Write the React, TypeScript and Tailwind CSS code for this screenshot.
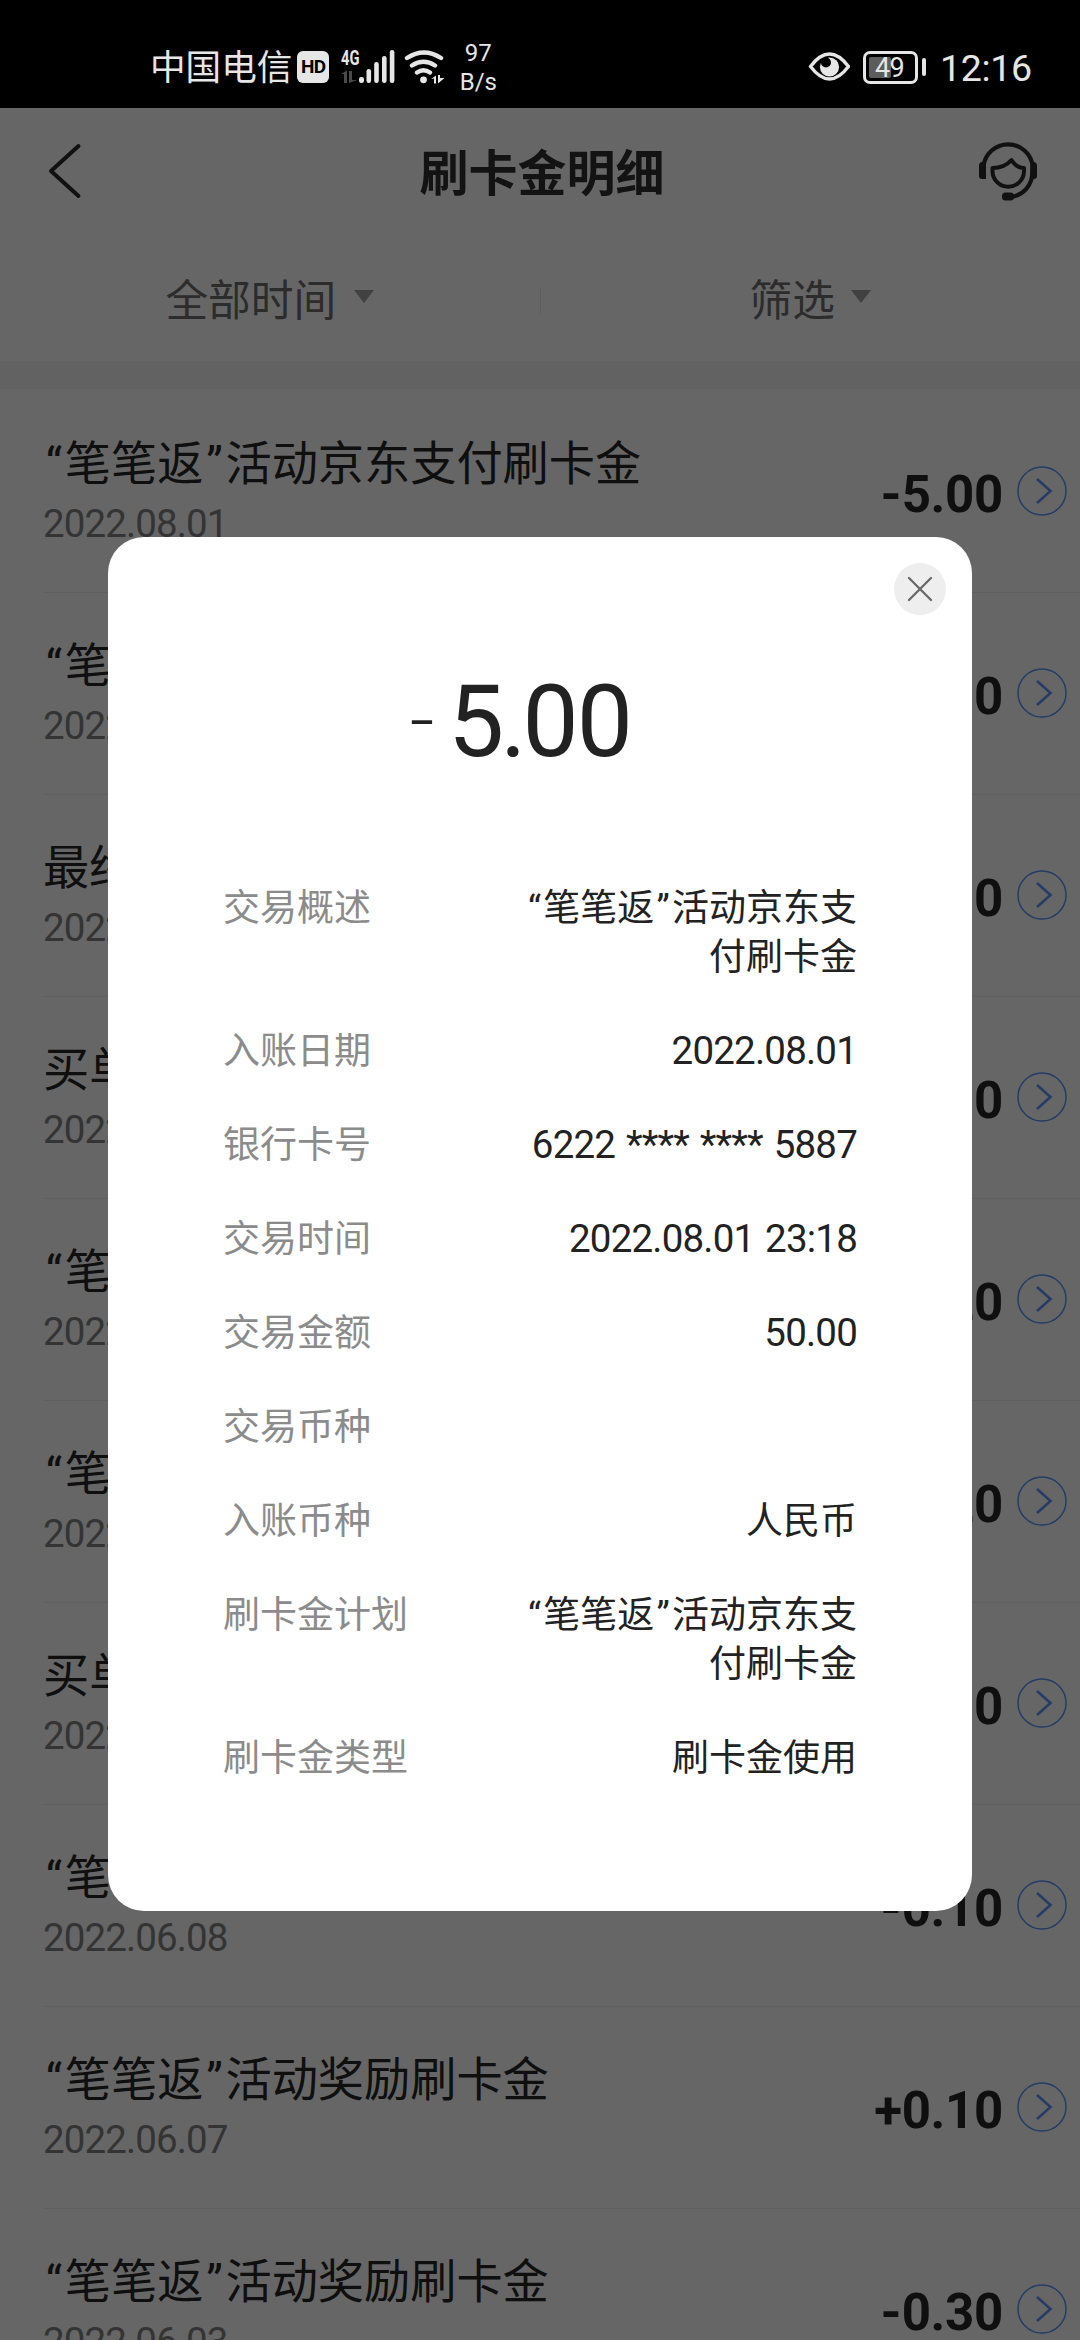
import React from 'react';

interface Entry {
  title: string;
  date: string;
  amount: string;
}

interface Detail {
  label: string;
  value: string;
}

const ENTRIES: Entry[] = [
  { title: '“笔笔返”活动京东支付刷卡金', date: '2022.08.01', amount: '-5.00' },
  { title: '“笔笔返”活动奖励刷卡金', date: '2022.07.31', amount: '+5.00' },
  { title: '最终返现刷卡金', date: '2022.07.20', amount: '+1.00' },
  { title: '买单立减刷卡金', date: '2022.07.12', amount: '-1.00' },
  { title: '“笔笔返”活动奖励刷卡金', date: '2022.06.20', amount: '-0.20' },
  { title: '“笔笔返”活动奖励刷卡金', date: '2022.06.16', amount: '+0.20' },
  { title: '买单立减刷卡金', date: '2022.06.10', amount: '-2.00' },
  { title: '“笔笔返”活动奖励刷卡金', date: '2022.06.08', amount: '-0.10' },
  { title: '“笔笔返”活动奖励刷卡金', date: '2022.06.07', amount: '+0.10' },
  { title: '“笔笔返”活动奖励刷卡金', date: '2022.06.03', amount: '-0.30' },
];

const DETAILS: Detail[] = [
  { label: '交易概述', value: '“笔笔返”活动京东支付刷卡金' },
  { label: '入账日期', value: '2022.08.01' },
  { label: '银行卡号', value: '6222 **** **** 5887' },
  { label: '交易时间', value: '2022.08.01 23:18' },
  { label: '交易金额', value: '50.00' },
  { label: '交易币种', value: '' },
  { label: '入账币种', value: '人民币' },
  { label: '刷卡金计划', value: '“笔笔返”活动京东支付刷卡金' },
  { label: '刷卡金类型', value: '刷卡金使用' },
];

// Curly quotes get some air, Latin and digits are set a little tighter
const MixedText: React.FC<{ text: string }> = ({ text }) => (
  <>
    {text.split(/([\x20-\x7e]+|[“”])/).map((part, i) => {
      if (i % 2 === 0) return part;
      return part === '“' || part === '”' ? (
        <span key={i} className="px-[0.06em]">{part}</span>
      ) : (
        <span key={i} className="text-[38.5px] leading-none tracking-[-0.8px] [word-spacing:2px]">{part}</span>
      );
    })}
  </>
);

const Amount: React.FC<{ value: string }> = ({ value }) => (
  <span className="flex items-center text-[51px] leading-[60px] font-bold tracking-[-0.3px] text-[#262626]">
    {value[0] === '-' ? <span className="mr-px inline-block scale-x-[1.05]">-</span> : <span>+</span>}
    <span>{value.slice(1)}</span>
  </span>
);

const StatusBar = () => (
  <div className="flex h-[108px] shrink-0 items-center bg-black pr-[51px] pl-[150px] text-[#e6e6e6]">
    <span className="mt-[27px] text-[35.6px] leading-[40px]">中国电信</span>
    <span className="mt-[26px] ml-[5px] flex h-8 w-8 items-center justify-center rounded-[6px] bg-[#e6e6e6] text-[19px] font-bold tracking-[-0.5px] text-black">
      HD
    </span>
    <svg className="mt-[26px] ml-[11px] overflow-visible" width="56" height="36" viewBox="340 48 56 36" fill="#e6e6e6">
      <text x="341" y="64" fontSize="21" fontWeight="700" textLength="18.500" lengthAdjust="spacingAndGlyphs">4G</text>
      <path d="M341 73l6-3.500V82h-3v-9zM349 82V70h3v9h5z" fill="#4a4a4a" />
      <rect x="359" y="76" width="5" height="6" rx="2.200" />
      <rect x="366.500" y="68" width="4.600" height="14" rx="2.200" />
      <rect x="374.200" y="61" width="4.600" height="21" rx="2.200" />
      <rect x="382" y="55" width="4.600" height="27" rx="2.200" />
      <rect x="389.800" y="49" width="4.600" height="33" rx="2.200" />
    </svg>
    <svg className="mt-[26px] ml-[8px]" width="42" height="36" viewBox="404 48 42 36" fill="none" stroke="#e6e6e6" strokeWidth="4.400" strokeLinecap="round">
      <path d="M407 57q17-11 34 0M412 64.500q11.500-7.500 23 0M417 71.500q6.500-4.500 13 0" />
      <circle cx="423.500" cy="78.800" r="3.400" fill="#e6e6e6" stroke="none" />
      <path d="M431 78l5-3.500v8h-2v-5zM438 82.500v-8.500h2v3h4.500z" fill="#e6e6e6" stroke="none" />
    </svg>
    <div className="mt-[27px] ml-[14px] flex w-9 flex-col items-center text-[24px] leading-[28.500px]">
      <span>97</span>
      <span>B/s</span>
    </div>
    <svg className="mt-[26px] ml-auto" width="42" height="30" viewBox="808 52 42 30">
      <path d="M810.500 66.500q19-25 38 0q-19 25-38 0z" fill="none" stroke="#e6e6e6" strokeWidth="3.400" strokeLinejoin="round" />
      <circle cx="829.500" cy="67" r="9.600" fill="#e6e6e6" />
      <circle cx="826" cy="62.500" r="5" fill="#000" />
    </svg>
    <div className="mt-[26px] ml-[13px] flex h-[33px] w-[55px] items-center rounded-[7px] border-3 border-[#e6e6e6] p-[3px]">
      <div className="relative h-[21px] w-[22px] rounded-[2px] bg-[#5c5c5c]">
        <span className="absolute top-0 left-[6px] text-[27px] leading-[22px] tracking-[-0.6px]">49</span>
      </div>
    </div>
    <div className="mt-[26px] ml-[4px] h-[18px] w-[4px] rounded-[2px] bg-[#e6e6e6]" />
    <span className="mt-[28px] ml-[14px] w-[89px] text-right text-[37.500px] leading-[44px] tracking-[-0.300px]">12:16</span>
  </div>
);

const Header = () => (
  <div className="flex h-[128px] shrink-0 items-center justify-between pr-[42px] pl-[46px]">
    <svg width="60" height="60" viewBox="46 142 60 60" fill="none" stroke="#2b2b2b" strokeWidth="4" strokeLinecap="round" strokeLinejoin="round">
      <path d="M78.500 146L51 171L78.500 196" />
    </svg>
    <h1 className="mt-[6px] text-[49px] leading-[60px] font-bold text-[#303030]">刷卡金明细</h1>
    <svg width="60" height="60" viewBox="978 142 60 60" fill="none" stroke="#2b2b2b" strokeWidth="4.200">
      <path d="M983.500 166a24.800 24.800 0 0 1 49.200 0v4c0 16-10 26-23 27" />
      <path d="M992.500 168q12 0 19-8q5 8 12.500 8v3a15.750 15.750 0 0 1-31.500 0z" strokeWidth="4" strokeLinejoin="round" />
      <path d="M986 162v17h-4q-3 0-3-3v-10q0-4 3-4zM1030.500 162h3q3.500 0 3.500 4v10q0 3-3 3h-4z" fill="#2b2b2b" stroke="none" />
      <rect x="1002" y="192.500" width="12" height="8" rx="3.500" fill="#2b2b2b" stroke="none" />
    </svg>
  </div>
);

const Caret = () => (
  <svg className="mb-2" width="20" height="13" viewBox="0 0 20 13" fill="#a3a3a3">
    <path d="M0 0h20L10 13z" />
  </svg>
);

const Filters = () => (
  <div className="flex h-[125px] shrink-0 items-center pt-[5px] text-[42.700px] text-[#6e6e6e]">
    <button className="flex flex-1 items-center justify-center gap-[18px]">
      全部时间 <Caret />
    </button>
    <div className="h-[26px] w-px bg-[#ebebeb]" />
    <button className="flex flex-1 items-center justify-center gap-[16px]">
      筛选 <Caret />
    </button>
  </div>
);

const EntryRow: React.FC<{ entry: Entry }> = ({ entry }) => (
  <div className="flex h-[202px] shrink-0 items-start border-b border-[#f0f0f0] pt-[43px]">
    <div className="flex flex-1 flex-col">
      <span className="text-[46.200px] leading-[60px] text-[#262626]">
        <MixedText text={entry.title} />
      </span>
      <span className="text-[38.500px] leading-[60px] tracking-[-0.900px] text-[#828282]">{entry.date}</span>
    </div>
    <div className="mt-[31px] flex items-center gap-[14px] pr-[13px]">
      <Amount value={entry.amount} />
      <svg className="-mt-[8px]" width="50" height="50" viewBox="0 0 50 50" fill="none" stroke="#5a96ff">
        <circle cx="25" cy="25" r="24" strokeWidth="1.500" />
        <path d="M20 13L33.500 25L20 37" strokeWidth="2.600" />
      </svg>
    </div>
  </div>
);

const DetailDialog = () => (
  <div className="relative flex h-[1374px] w-[864px] flex-col rounded-[36px] bg-white">
    <button className="absolute top-[26px] right-[26px] flex h-[52px] w-[52px] items-center justify-center rounded-full bg-[#eeeeee]">
      <svg width="26" height="26" viewBox="0 0 26 26" fill="none" stroke="#666" strokeWidth="2.200" strokeLinecap="round">
        <path d="M2 2l22 22M24 2L2 24" />
      </svg>
    </button>
    <div className="mt-[125px] flex h-[120px] items-center pl-[300px] text-[#222]">
      <span className="mb-1 flex w-[28px] scale-x-[1.7] justify-center text-[50px]">-</span>
      <span className="ml-[12px] text-[100px] leading-[120px] tracking-[-2px]">
        5<span className="-mx-[2px]">.</span>00
      </span>
    </div>
    <div className="mt-[102px] flex flex-col gap-[45px] px-[115px]">
      {DETAILS.map((d) => (
        <div key={d.label} className="flex justify-between text-[37px] leading-[49px]">
          <span className="text-[#8b8b8b]">{d.label}</span>
          <span className="w-[340px] text-right text-[#222]">
            <MixedText text={d.value} />
          </span>
        </div>
      ))}
    </div>
  </div>
);

export default function App() {
  return (
    <div className="relative flex h-[2340px] w-[1080px] flex-col overflow-hidden bg-white font-['Roboto','Noto_Sans_CJK_SC',sans-serif]">
      <StatusBar />
      <Header />
      <Filters />
      <div className="h-[28px] shrink-0 bg-[#f5f5f5]" />
      <div className="mt-[2px] flex flex-col pl-[43px]">
        {ENTRIES.map((e) => (
          <EntryRow key={e.date} entry={e} />
        ))}
      </div>

      {/* Dimmed backdrop with the dialog on top */}
      <div className="absolute inset-x-0 top-[108px] bottom-0 flex justify-center bg-black/60 pt-[429px]">
        <DetailDialog />
      </div>
    </div>
  );
}
